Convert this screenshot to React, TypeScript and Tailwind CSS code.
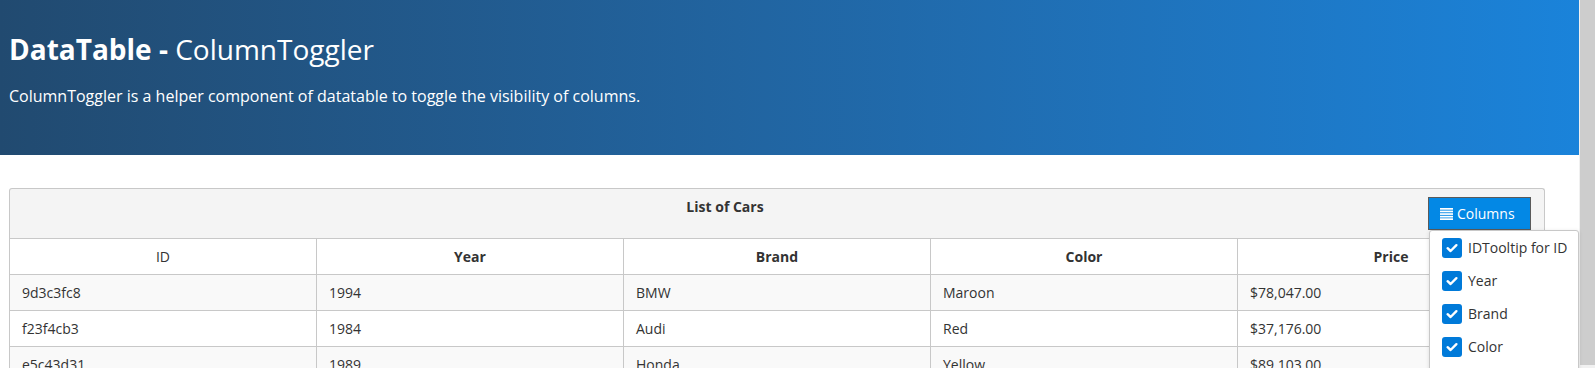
import React from "react";

const rows = [
  { id: "9d3c3fc8", year: "1994", brand: "BMW", color: "Maroon", price: "$78,047.00" },
  { id: "f23f4cb3", year: "1984", brand: "Audi", color: "Red", price: "$37,176.00" },
  { id: "e5c43d31", year: "1989", brand: "Honda", color: "Yellow", price: "$89,103.00" },
];

const options = ["IDTooltip for ID", "Year", "Brand", "Color", "Price"];

function Check() {
  return (
    <span className="flex h-[20px] w-[20px] shrink-0 items-center justify-center rounded-[3px] bg-[#007ad9]">
      <svg width="14" height="14" viewBox="0 0 14 14" fill="none">
        <path d="M2.6 7.2 L5.6 10 L11.4 4.2" stroke="white" strokeWidth="2.4" strokeLinecap="round" strokeLinejoin="round" />
      </svg>
    </span>
  );
}

function BarsIcon() {
  return (
    <svg width="13" height="12" viewBox="0 0 13 12" fill="white">
      <rect x="0" y="0" width="13" height="1.7" />
      <rect x="0" y="2.6" width="13" height="1.7" />
      <rect x="0" y="5.2" width="13" height="1.7" />
      <rect x="0" y="7.8" width="13" height="1.7" />
      <rect x="0" y="10.3" width="13" height="1.7" />
    </svg>
  );
}

export default function App() {
  return (
    <div
      className="flex h-[368px] w-[1595px] overflow-hidden bg-white text-[#333333]"
      style={{ fontFamily: '"Open Sans", "Noto Sans", sans-serif' }}
    >
      <div className="flex w-[1579px] shrink-0 flex-col">
        <div className="h-[155px] shrink-0 bg-linear-to-r from-[#214a70] to-[#1a83da] pl-[9px] pt-[30px] text-white">
          <h1 className="text-[28px] leading-[38px]">
            <span className="font-bold">DataTable - </span>
            <span className="font-normal">ColumnToggler</span>
          </h1>
          <p className="mt-[17px] text-[16px] leading-[22px]">
            ColumnToggler is a helper component of datatable to toggle the visibility of columns.
          </p>
        </div>

        <div className="ml-[9px] mt-[33px] w-[1536px] shrink-0">
          <div className="flex items-start rounded-t-[3px] border-x border-t border-[#c8c8c8] bg-[#f4f4f4] pb-[8px] pl-[12px] pr-[13px] pt-[8px]">
            <div className="flex-1 text-center text-[14px] font-bold leading-[19px]">List of Cars</div>
            <div className="relative">
              <button className="flex h-[33px] w-[103px] items-center gap-[4px] border border-[#5a5a5a] bg-[#0388e5] pl-[11px] text-[14px] leading-[19px] text-white">
                <BarsIcon />
                <span>Columns</span>
              </button>
              <div className="absolute left-[1px] top-full z-10 w-[150px] rounded-[3px] border border-[#c8c8c8] bg-white pl-[12px] pt-[7px] shadow-[0_1px_4px_rgba(0,0,0,0.12)]">
                {options.map((o) => (
                  <div key={o} className="flex h-[33px] items-start gap-[6px]">
                    <Check />
                    <span className="text-[14px] leading-[20px] text-[#333333]">{o}</span>
                  </div>
                ))}
              </div>
            </div>
          </div>

          <div className="border-l border-[#c8c8c8] text-[14px]">
            <div className="grid h-[37px] grid-cols-5 border-y border-[#c8c8c8] bg-white">
              <div className="flex items-center justify-center border-r border-[#c8c8c8] font-normal">ID</div>
              <div className="flex items-center justify-center border-r border-[#c8c8c8] font-bold">Year</div>
              <div className="flex items-center justify-center border-r border-[#c8c8c8] font-bold">Brand</div>
              <div className="flex items-center justify-center border-r border-[#c8c8c8] font-bold">Color</div>
              <div className="flex items-center justify-center border-r border-[#c8c8c8] font-bold">Price</div>
            </div>
            {rows.map((r, i) => (
              <div
                key={r.id}
                className={`grid h-[36px] grid-cols-5 border-b border-[#c8c8c8] ${i % 2 === 0 ? "bg-[#f9f9f9]" : "bg-white"}`}
              >
                <div className="flex items-center border-r border-[#c8c8c8] pl-[12px]">{r.id}</div>
                <div className="flex items-center border-r border-[#c8c8c8] pl-[12px]">{r.year}</div>
                <div className="flex items-center border-r border-[#c8c8c8] pl-[12px]">{r.brand}</div>
                <div className="flex items-center border-r border-[#c8c8c8] pl-[12px]">{r.color}</div>
                <div className="flex items-center border-r border-[#c8c8c8] pl-[12px]">{r.price}</div>
              </div>
            ))}
          </div>
        </div>
      </div>
      <div className="flex w-[16px] shrink-0 flex-col bg-[#f1f1f1] pl-[1px]">
        <div className="h-[365px] bg-[#cdcdcd]" />
      </div>
    </div>
  );
}
